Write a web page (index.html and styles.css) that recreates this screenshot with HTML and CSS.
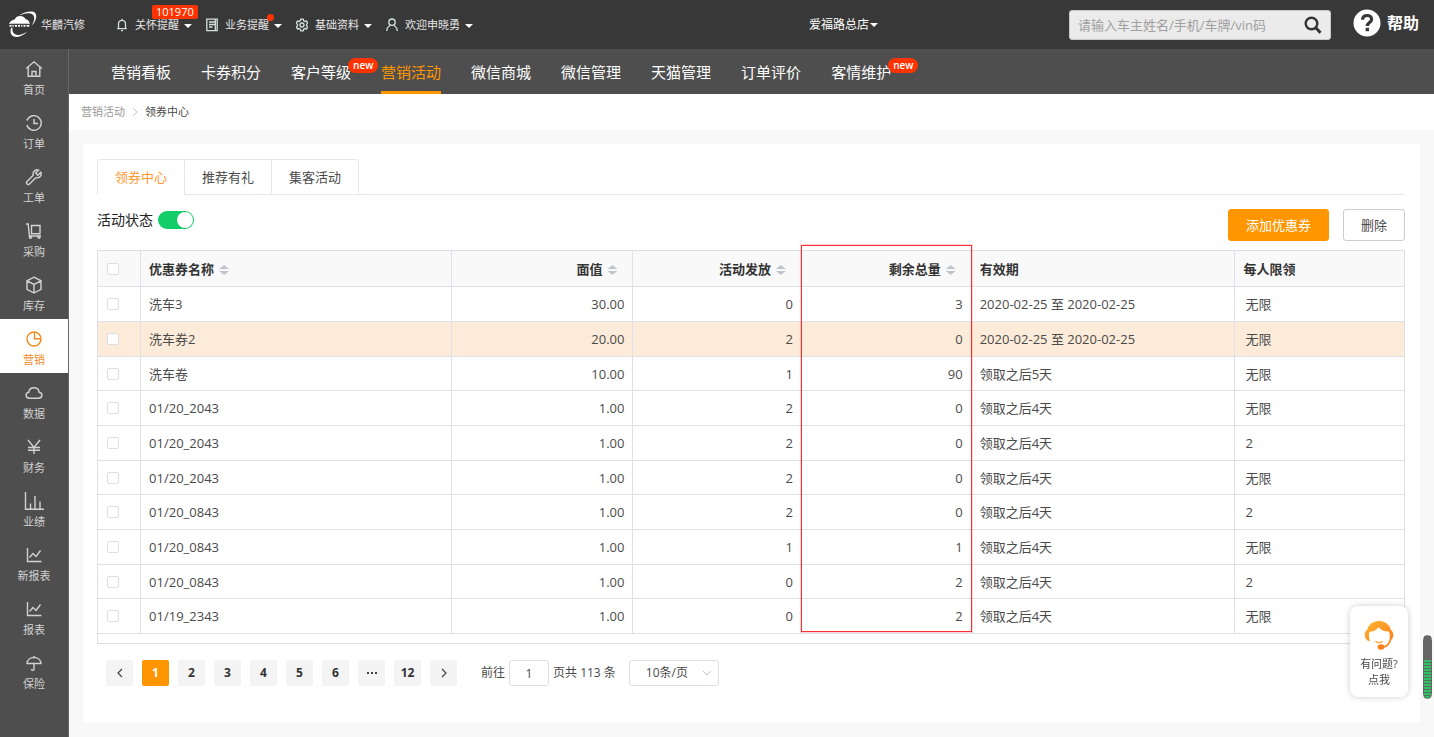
FILE: index.html
```html
<!DOCTYPE html>
<html lang="zh-CN">
<head>
<meta charset="utf-8">
<title>领券中心</title>
<link rel="stylesheet" href="styles.css">
</head>
<body>
<header class="topbar">
  <a class="brand" href="#">
    <svg width="30" height="28" viewBox="0 0 30 28" fill="none">
      <path d="M11 4.500C15 1.500 20 .2 24 .5c4 .4 5 4 3.800 7.500-.8 2.500-2 4.500-4 6.300 1.800-3 2.700-5.500 2.400-8C25.800 3 23 2 20 2.200c-3 .2-6 1-9 2.300z" fill="#fff"/>
      <path d="M1.500 12c.8-2 3-2.700 5-3.500C8 6 9.500 5 12 5s4.500 1.200 6 3.300c1.800.7 3.200 1.700 3.500 3.700z" fill="#fff"/>
      <path d="M1 12.600h21" stroke="#fff" stroke-width=".8"/>
      <path d="M1.500 14.800h2M4.500 14.800h1.200M7 14.800h2M10 14.800h2M13.200 14.800h1.200M15.500 14.800h2M18.700 14.800h2.500" stroke="#fff" stroke-width="1.800"/>
      <path d="M3.200 16.800c-1.200 3.200-1 6.700 2 8.400 5 2 10.500-.7 14-4.700-4 2.800-7.500 4-10.800 3.200-3.200-.8-4.400-3.400-3.900-6.900z" fill="#fff"/>
    </svg>
    <span>华麟汽修</span>
  </a>
  <nav class="quick" aria-label="快捷菜单">
    <a href="#">
      <svg width="12" height="14" viewBox="0 0 12 14" class="ln"><path d="M2.500 10.500V5.800a3.500 3.500 0 0 1 7 0v4.700M1.200 10.700h9.600M5 12.700h2M6 2.200V.8"/></svg>
      <span>关怀提醒</span><i class="caret"></i><b class="count">101970</b>
    </a>
    <a href="#">
      <svg width="12" height="14" viewBox="0 0 12 14" class="ln"><path d="M.8 12.700V1.200h10.400v11.500zM3 4h6M3 6.500h6M3 9h3.500M9.300 1.200v11"/></svg>
      <span>业务提醒<b class="dot"></b></span><i class="caret"></i>
    </a>
    <a href="#">
      <svg width="12" height="14" viewBox="0 0 12 14" class="ln"><path d="M4.800 1.200h2.400l.5 1.600 1.300.7 1.600-.4 1 2-1.100 1.300v1.200l1.100 1.300-1 2-1.600-.4-1.300.7-.5 1.600H4.800l-.5-1.600-1.300-.7-1.600.4-1-2 1.100-1.300V6.400L.4 5.100l1-2 1.600.4 1.300-.7z"/><circle cx="6" cy="7" r="2"/></svg>
      <span>基础资料</span><i class="caret"></i>
    </a>
    <a href="#">
      <svg width="12" height="14" viewBox="0 0 12 14" class="ln"><circle cx="6" cy="4.200" r="3.200"/><path d="M.8 13c0-3 1.400-4.600 3.400-5.500M11.200 13c0-3-1.400-4.600-3.400-5.500"/></svg>
      <span>欢迎申晓勇</span><i class="caret"></i>
    </a>
  </nav>
  <div class="store"><a href="#">爱福路总店<i class="caret"></i></a></div>
  <form class="search" role="search">
    <input type="text" aria-label="搜索" placeholder="请输入车主姓名/手机/车牌/vin码">
    <button type="button" aria-label="搜索"><svg width="18" height="18" viewBox="0 0 18 18" fill="none" stroke="#333" stroke-width="2.400"><circle cx="7.500" cy="7.500" r="5.800"/><path d="M11.800 11.800l4.700 4.900" stroke-width="3"/></svg></button>
  </form>
  <a class="help" href="#">
    <svg width="28" height="28" viewBox="0 0 28 28"><circle cx="14" cy="14" r="13.500" fill="#fff"/><path d="M9.600 10.800c0-2.800 1.900-4.300 4.500-4.300 2.700 0 4.500 1.600 4.500 3.800 0 3.300-4.300 3.300-4.300 6.700" fill="none" stroke="#383838" stroke-width="3.200"/><rect x="12.600" y="18.800" width="3.400" height="3.400" fill="#383838"/></svg>
    <span>帮助</span>
  </a>
</header>

<div class="shell">
  <nav class="side" aria-label="主菜单">
    <a href="#"><svg width="18" height="18" viewBox="0 0 18 18"><path d="M1.200 8.500L9 1.800l7.800 6.700M3.200 7v9.200h11.600V7M7 16v-4.500h4V16"/></svg><span>首页</span></a>
    <a href="#"><svg width="18" height="18" viewBox="0 0 18 18"><path d="M2.500 5.500a7.300 7.300 0 1 1-.6 5.500M2.500 13.500l.2.300M1.500 5.500l1.300.8M9 5v4.500h4"/></svg><span>订单</span></a>
    <a href="#"><svg width="18" height="18" viewBox="0 0 18 18"><path d="M15.800 4.300l-3 3-2.200-2.200 3-3C11 .8 7.300 3 8.200 7.200L2 13.500c-1.500 1.600.8 4 2.500 2.500l6.300-6.300c3.700 1 6.400-2.200 5-5.400z"/></svg><span>工单</span></a>
    <a href="#"><svg width="18" height="18" viewBox="0 0 18 18"><path d="M1 2h2.200l1.200 12H16M6.500 3.500H15v8.300H6.500z"/><circle cx="5.500" cy="15.300" r="1"/><circle cx="14" cy="15.300" r="1"/></svg><span>采购</span></a>
    <a href="#"><svg width="18" height="18" viewBox="0 0 18 18"><path d="M9 1.200l7 3.600v8.600l-7 3.600-7-3.600V4.800zM2 4.800l7 3.600 7-3.600M9 8.400V17"/></svg><span>库存</span></a>
    <a href="#" class="on" aria-current="page"><svg width="18" height="18" viewBox="0 0 18 18"><circle cx="9" cy="9" r="7"/><path d="M9.500 2v6.700H16"/></svg><span>营销</span></a>
    <a href="#"><svg width="18" height="18" viewBox="0 0 18 18"><path d="M4.500 14.200c-4.500 0-4.300-5.500-.7-5.900.5-6 9.600-6 10.400 0 3.600.4 3.800 5.900-.7 5.900z"/></svg><span>数据</span></a>
    <a href="#"><svg width="18" height="18" viewBox="0 0 18 18"><path d="M3 2l6 7.500L15 2M9 9.500V16M3 9.500h12M3 12.300h12"/></svg><span>财务</span></a>
    <a href="#"><svg width="20" height="18" viewBox="0 0 20 18"><path d="M1.500 0v17.200H20M6.500 17v-5.500M11 17V4M16 17V9.500"/></svg><span>业绩</span></a>
    <a href="#"><svg width="18" height="18" viewBox="0 0 18 18"><path d="M2.500 2v13.500h14M4.500 11.500l3.500-4 3 3 4.500-6"/></svg><span>新报表</span></a>
    <a href="#"><svg width="18" height="18" viewBox="0 0 18 18"><path d="M2.500 2v13.500h14M4.500 11.500l3.500-4 3 3 4.500-6"/></svg><span>报表</span></a>
    <a href="#"><svg width="18" height="18" viewBox="0 0 18 18"><path d="M2 9.500c.5-8 13.500-8 14 0zM9 3.500V2M9 9.500v5.500c0 2-2.500 1.500-2.500 0"/></svg><span>保险</span></a>
  </nav>

  <div class="body">
    <nav class="subnav" aria-label="营销菜单">
      <a href="#">营销看板</a>
      <a href="#">卡券积分</a>
      <a href="#">客户等级<b class="new">new</b></a>
      <a href="#" class="on" aria-current="page">营销活动</a>
      <a href="#">微信商城</a>
      <a href="#">微信管理</a>
      <a href="#">天猫管理</a>
      <a href="#">订单评价</a>
      <a href="#">客情维护<b class="new">new</b></a>
    </nav>
    <div class="crumbs">
      <a href="#">营销活动</a>
      <svg width="6" height="10" viewBox="0 0 6 10" fill="none" stroke="#bfc3cc"><path d="M1 1l4 4-4 4"/></svg>
      <span>领券中心</span>
    </div>

    <main class="card">
      <div class="tabs" role="tablist">
        <button type="button" role="tab" aria-selected="true" class="on">领券中心</button>
        <button type="button" role="tab" aria-selected="false">推荐有礼</button>
        <button type="button" role="tab" aria-selected="false">集客活动</button>
      </div>
      <div class="tools">
        <label class="status">活动状态<input type="checkbox" role="switch" class="switch" checked></label>
        <div class="actions">
          <button type="button" class="primary">添加优惠券</button>
          <button type="button">删除</button>
        </div>
      </div>

      <div class="grid">
        <table>
          <colgroup><col class="c-check"><col class="c-name"><col class="c-value"><col class="c-sent"><col class="c-left"><col class="c-valid"><col class="c-limit"></colgroup>
          <thead>
            <tr>
              <th><input type="checkbox" aria-label="全选"></th>
              <th>优惠券名称<i class="sort"></i></th>
              <th class="num">面值<i class="sort"></i></th>
              <th class="num">活动发放<i class="sort"></i></th>
              <th class="num">剩余总量<i class="sort"></i></th>
              <th>有效期</th>
              <th>每人限领</th>
            </tr>
          </thead>
          <tbody>
            <tr><td><input type="checkbox" aria-label="选择"></td><td>洗车3</td><td class="num">30.00</td><td class="num">0</td><td class="num">3</td><td>2020-02-25 至 2020-02-25</td><td>无限</td></tr>
            <tr class="hover"><td><input type="checkbox" aria-label="选择"></td><td>洗车券2</td><td class="num">20.00</td><td class="num">2</td><td class="num">0</td><td>2020-02-25 至 2020-02-25</td><td>无限</td></tr>
            <tr><td><input type="checkbox" aria-label="选择"></td><td>洗车卷</td><td class="num">10.00</td><td class="num">1</td><td class="num">90</td><td>领取之后5天</td><td>无限</td></tr>
            <tr><td><input type="checkbox" aria-label="选择"></td><td>01/20_2043</td><td class="num">1.00</td><td class="num">2</td><td class="num">0</td><td>领取之后4天</td><td>无限</td></tr>
            <tr><td><input type="checkbox" aria-label="选择"></td><td>01/20_2043</td><td class="num">1.00</td><td class="num">2</td><td class="num">0</td><td>领取之后4天</td><td>2</td></tr>
            <tr><td><input type="checkbox" aria-label="选择"></td><td>01/20_2043</td><td class="num">1.00</td><td class="num">2</td><td class="num">0</td><td>领取之后4天</td><td>无限</td></tr>
            <tr><td><input type="checkbox" aria-label="选择"></td><td>01/20_0843</td><td class="num">1.00</td><td class="num">2</td><td class="num">0</td><td>领取之后4天</td><td>2</td></tr>
            <tr><td><input type="checkbox" aria-label="选择"></td><td>01/20_0843</td><td class="num">1.00</td><td class="num">1</td><td class="num">1</td><td>领取之后4天</td><td>无限</td></tr>
            <tr><td><input type="checkbox" aria-label="选择"></td><td>01/20_0843</td><td class="num">1.00</td><td class="num">0</td><td class="num">2</td><td>领取之后4天</td><td>2</td></tr>
            <tr><td><input type="checkbox" aria-label="选择"></td><td>01/19_2343</td><td class="num">1.00</td><td class="num">0</td><td class="num">2</td><td>领取之后4天</td><td>无限</td></tr>
          </tbody>
        </table>
        <div class="marker"></div>
      </div>

      <div class="pager">
        <button type="button" aria-label="上一页"><svg width="8" height="10" viewBox="0 0 8 10"><path d="M6 1L2 5l4 4"/></svg></button>
        <button type="button" class="on">1</button>
        <button type="button">2</button>
        <button type="button">3</button>
        <button type="button">4</button>
        <button type="button">5</button>
        <button type="button">6</button>
        <button type="button" aria-label="更多"><svg width="12" height="4" viewBox="0 0 12 4"><path d="M1 2h2M5 2h2M9 2h2" stroke-width="2"/></svg></button>
        <button type="button">12</button>
        <button type="button" aria-label="下一页"><svg width="8" height="10" viewBox="0 0 8 10"><path d="M2 1l4 4-4 4"/></svg></button>
        <div class="jump"><label for="page">前往</label><input id="page" type="text" value="1"><span>页共 113 条</span></div>
        <div class="size">
          <select aria-label="每页条数"><option>10条/页</option></select>
          <svg width="10" height="6" viewBox="0 0 10 6" fill="none" stroke="#c0c4cc"><path d="M1 1l4 4 4-4"/></svg>
        </div>
      </div>
    </main>
  </div>
</div>

<a class="support" href="#">
  <svg width="30" height="30" viewBox="0 0 30 30">
    <defs><linearGradient id="hair" x1="0" y1="0" x2="1" y2="1"><stop offset="0" stop-color="#ffb733"/><stop offset="1" stop-color="#ff7d1a"/></linearGradient></defs>
    <path d="M3 10C5 3.500 10 1 15 1s10 2.500 12 9c1.500 1 2.300 2.800 2.300 5s-.8 4-2.300 5l-1.800 1.200c.8-3 .8-7-.2-9.700-4 .3-8-1.200-10.500-4.500-1.200 2.500-4.500 4.500-9 5-1 2-.6 6.500.5 9.200C2.500 20.500.7 18.500.7 15c0-2.200.8-4 2.300-5z" fill="url(#hair)"/>
    <path d="M26.500 19.500c-1 4.500-4.500 7.500-9 8" fill="none" stroke="#ff8a1c" stroke-width="1.600"/>
    <path d="M11.500 21.300c2 1.800 5 1.800 7 0" fill="none" stroke="#ff9b22" stroke-width="1.300"/>
    <ellipse cx="17" cy="27" rx="3.400" ry="2.800" fill="#ff7d1a"/>
  </svg>
  <span>有问题?<br>点我</span>
</a>
<div class="meter"></div>
</body>
</html>
```
FILE: styles.css
```css
* { box-sizing: border-box; }
body {
  margin: 0;
  min-height: 100vh;
  display: flex;
  flex-direction: column;
  background: #f8f8f8;
  color: #4a4a4a;
  font: 13px/20px "Open Sans", "Noto Sans CJK SC", sans-serif;
}
a { color: inherit; text-decoration: none; }
button, input, select { font: inherit; color: inherit; margin: 0; }
svg { flex: none; display: block; }

.topbar {
  display: flex;
  align-items: center;
  height: 49px;
  padding: 0 15px 0 8px;
  background: #383838;
  color: #e6e6e6;
  font-size: 11px;
}
.brand { display: flex; align-items: center; gap: 3px; width: 108px; }
.quick { display: flex; gap: 14px; }
.quick a { position: relative; display: flex; align-items: center; }
.quick span { position: relative; margin: 0 5px 0 7px; white-space: nowrap; }
.ln { fill: none; stroke: #d4e2de; stroke-width: 1.300; }
.caret {
  display: inline-block;
  border: 4px solid transparent;
  border-top-color: #fff;
  border-bottom: 0;
  margin-top: 3px;
}
.count {
  position: absolute;
  left: 36px;
  top: -10px;
  padding: 0 4px;
  border-radius: 2px;
  background: #ff3300;
  color: #fff;
  font-weight: 400;
  line-height: 14px;
}
.dot {
  position: absolute;
  right: -5px;
  top: -1px;
  width: 7px;
  height: 7px;
  border-radius: 50%;
  background: #ff3300;
}
.store { flex: 1; padding-right: 191px; text-align: right; font-size: 12px; color: #fff; white-space: nowrap; }
.store .caret { vertical-align: middle; margin: 0 0 0 1px; }
.search {
  display: flex;
  align-items: center;
  width: 262px;
  height: 30px;
  padding: 0 8px;
  border-radius: 3px;
  border: 1px solid #c9c9c9;
  background: #ebebeb;
}
.search input { flex: 1; min-width: 0; padding: 0; border: 0; background: none; outline: 0; font-size: 13px; color: #444; }
.search input::placeholder { color: #a0a0a0; opacity: 1; }
.search button { padding: 0; border: 0; background: none; }
.help { display: flex; align-items: center; gap: 6px; margin: -4px 0 0 22px; font-size: 16px; font-weight: 700; color: #fff; }

.shell { flex: 1; display: flex; }
.side { width: 69px; flex: none; background: #4e4e4e; border-right: 1px solid #666; color: #d2d2d2; font-size: 11px; }
.side a { display: flex; flex-direction: column; align-items: center; height: 54px; padding-top: 11px; line-height: 14px; }
.side span { margin-top: 5px; }
.side svg { fill: none; stroke: currentColor; stroke-width: 1.400; }
.side .on { background: #fff; color: #f28a1e; }

.body { flex: 1; min-width: 0; display: flex; flex-direction: column; }
.subnav { display: flex; gap: 30px; height: 45px; padding-left: 42px; background: #4e4e4e; color: #fff; font-size: 15px; line-height: 46px; }
.subnav a { position: relative; white-space: nowrap; }
.subnav .on { color: #ff9600; border-bottom: 3px solid #ff9600; }
.new {
  position: absolute;
  left: 57px;
  top: 9px;
  padding: 0 5px;
  border-radius: 8px;
  background: #ff3300;
  font-size: 10px;
  font-weight: 600;
  line-height: 15px;
}
.crumbs { display: flex; align-items: center; gap: 7px; height: 36px; padding-left: 12px; background: #fff; font-size: 11px; }
.crumbs a { color: #999; }

.card { flex: 1; margin: 14px; padding: 15px 15px 36px 14px; background: #fff; }
.tabs { display: flex; border-bottom: 1px solid #e4e7ed; }
.tabs button { height: 36px; margin-bottom: -1px; padding: 0 17px; border: 1px solid #e4e7ed; border-left: 0; background: #fff; }
.tabs button:first-child { border-left: 1px solid #e4e7ed; border-radius: 4px 0 0; }
.tabs button:last-child { border-radius: 0 4px 0 0; }
.tabs .on { color: #ff9a33; border-bottom-color: #fff; }

.tools { display: flex; justify-content: space-between; margin: 14px 0 9px; }
.status { display: flex; align-items: center; gap: 5px; height: 22px; font-size: 14px; color: #222; }
.switch { appearance: none; position: relative; width: 36px; height: 18px; border-radius: 9px; background: #13ce66; }
.switch::after { content: ""; position: absolute; right: 1px; top: 1px; width: 16px; height: 16px; border-radius: 50%; background: #fff; }
.actions { display: flex; gap: 14px; }
.actions button { height: 32px; padding: 0 17px; border: 1px solid #ccc; border-radius: 3px; background: #fff; line-height: 18px; }
.actions .primary { border-color: #ff9600; background: #ff9600; color: #fff; }

.grid { position: relative; border: 1px solid #dcdfe6; padding-bottom: 9px; }
table { width: 100%; table-layout: fixed; border-collapse: separate; border-spacing: 0; }
.c-check { width: 3.300%; }
.c-name { width: 23.800%; }
.c-value { width: 13.900%; }
.c-sent { width: 12.900%; }
.c-left { width: 13%; }
.c-valid { width: 20.200%; }
.c-limit { width: 12.900%; }
th, td { padding: 0 8px; border-right: 1px solid #dfe1ea; border-bottom: 1px solid #dfe1ea; text-align: left; white-space: nowrap; }
th:last-child, td:last-child { border-right: 0; }
th { height: 36px; background: #f9f9f9; color: #333; font-weight: 700; }
td { height: 35px; }
td:last-child { padding-left: 10px; }
tbody tr:nth-child(3n) td { height: 34px; }
.hover td { background: #fdebd9; }
.num { text-align: right; }
th.num { padding-right: 15px; }
th input, td input { appearance: none; display: block; width: 12px; height: 12px; margin-left: 1px; border: 1px solid #dcdfe6; border-radius: 2px; background: #fff; }
.sort { display: inline-block; width: 10px; height: 10px; margin-left: 5px; vertical-align: middle; background: #c0c4cc; clip-path: polygon(50% 0, 100% 40%, 0 40%, 0 60%, 100% 60%, 50% 100%, 0 60%, 0 40%); }
.marker {
  position: absolute;
  left: 53.800%;
  top: -6px;
  bottom: 11px;
  width: 13.100%;
  border: 1px solid #fb3030;
  box-shadow: 0 0 0 1px rgba(251, 48, 48, .2);
  pointer-events: none;
}

.pager { display: flex; align-items: center; gap: 9px; margin: 16px 0 0 9px; font-size: 12px; }
.pager button { display: grid; place-items: center; width: 27px; height: 26px; padding: 0; border: 0; border-radius: 2px; background: #f4f4f5; color: #333; font-weight: 700; }
.pager button svg { fill: none; stroke: #444; stroke-width: 1.200; }
.pager .on { background: #ff9600; color: #fff; }
.jump { display: flex; align-items: center; gap: 4px; margin-left: 15px; }
.jump input { width: 40px; height: 26px; padding: 0; border: 1px solid #dcdfe6; border-radius: 3px; text-align: center; }
.size { position: relative; margin-left: 4px; }
.size select { appearance: none; width: 90px; height: 26px; padding: 0 16px; border: 1px solid #dcdfe6; border-radius: 3px; background: #fff; }
.size svg { position: absolute; right: 7px; top: 10px; }

.support {
  position: fixed;
  right: 26px;
  bottom: 40px;
  display: flex;
  flex-direction: column;
  align-items: center;
  gap: 6px;
  width: 58px;
  padding: 14px 0 9px;
  border-radius: 8px;
  background: #fff;
  box-shadow: 0 0 6px rgba(0, 0, 0, .2);
  font-size: 11px;
  line-height: 16px;
  text-align: center;
}
.meter {
  position: fixed;
  right: 2px;
  bottom: 38px;
  width: 9px;
  height: 64px;
  border: 1px solid #666;
  border-radius: 5px;
  background: linear-gradient(#666 24px, transparent 24px), repeating-linear-gradient(#2fc265 0 2px, #5b6b5f 2px 3px);
}
```
